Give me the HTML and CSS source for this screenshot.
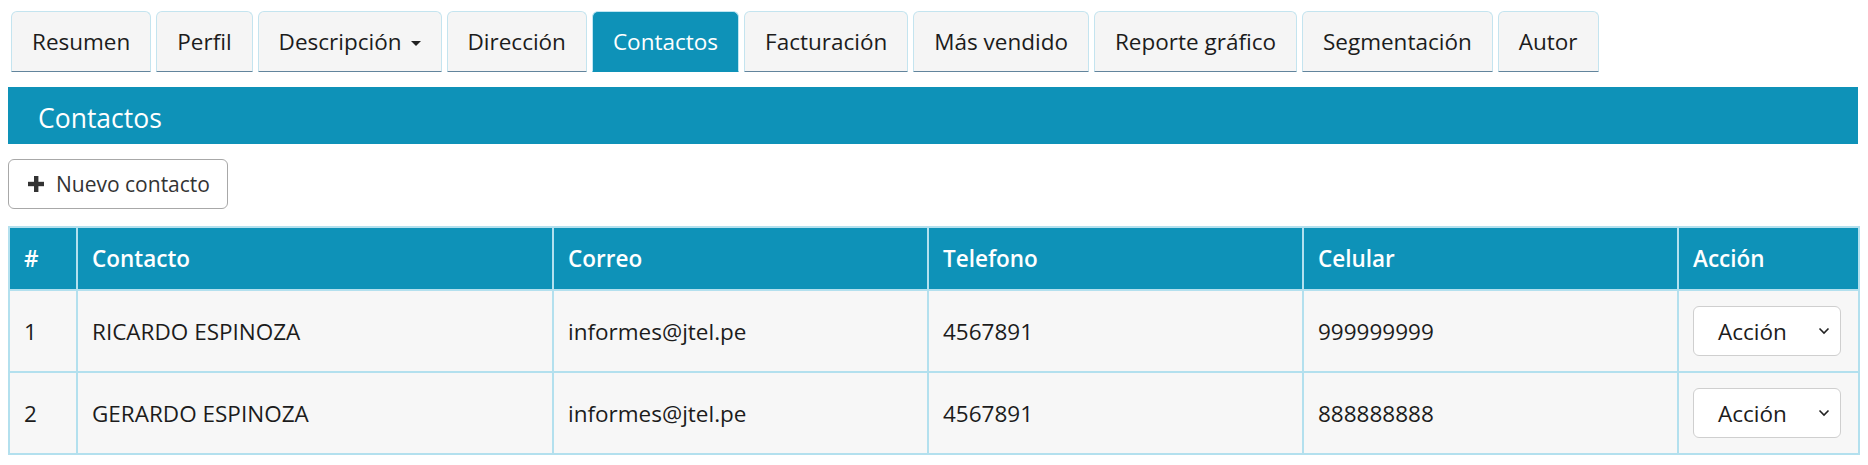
FILE: index.html
```html
<!DOCTYPE html>
<html lang="es">
<head>
    <meta charset="UTF-8">
    <title>Contactos</title>
    <link rel="stylesheet" href="styles.css">
</head>
<body>

    <!-- Pestañas -->
    <ul class="tabs">
        <li class="tab">Resumen</li>
        <li class="tab">Perfil</li>
        <li class="tab">Descripción <span class="caret"></span></li>
        <li class="tab">Dirección</li>
        <li class="tab active">Contactos</li>
        <li class="tab">Facturación</li>
        <li class="tab">Más vendido</li>
        <li class="tab">Reporte gráfico</li>
        <li class="tab">Segmentación</li>
        <li class="tab">Autor</li>
    </ul>

    <div class="panel-heading">Contactos</div>

    <button class="btn-new">
        <svg class="icon-plus" width="16" height="16" viewBox="0 0 16 16">
            <rect x="6" y="0" width="4.4" height="16" fill="#333"/>
            <rect x="0" y="5.8" width="16" height="4.4" fill="#333"/>
        </svg>
        Nuevo contacto
    </button>

    <table class="contacts">
        <colgroup>
            <col class="c-num">
            <col class="c-name">
            <col class="c-mid">
            <col class="c-mid">
            <col class="c-mid">
            <col class="c-act">
        </colgroup>
        <thead>
            <tr>
                <th>#</th>
                <th>Contacto</th>
                <th>Correo</th>
                <th>Telefono</th>
                <th>Celular</th>
                <th>Acción</th>
            </tr>
        </thead>
        <tbody>
            <tr>
                <td>1</td>
                <td>RICARDO ESPINOZA</td>
                <td>informes@jtel.pe</td>
                <td>4567891</td>
                <td>999999999</td>
                <td>
                    <div class="select">
                        <span>Acción</span>
                        <svg width="12" height="8" viewBox="0 0 12 8"><path d="M1.5 1.5 L6 6 L10.5 1.5" fill="none" stroke="#222" stroke-width="1.6"/></svg>
                    </div>
                </td>
            </tr>
            <tr>
                <td>2</td>
                <td>GERARDO ESPINOZA</td>
                <td>informes@jtel.pe</td>
                <td>4567891</td>
                <td>888888888</td>
                <td>
                    <div class="select">
                        <span>Acción</span>
                        <svg width="12" height="8" viewBox="0 0 12 8"><path d="M1.5 1.5 L6 6 L10.5 1.5" fill="none" stroke="#222" stroke-width="1.6"/></svg>
                    </div>
                </td>
            </tr>
        </tbody>
    </table>

</body>
</html>
```

FILE: styles.css
```css
* {
    box-sizing: border-box;
}

body {
    margin: 0;
    padding: 11px 10px 0 8px;
    font-family: "Open Sans", "Noto Sans", sans-serif;
    font-size: 22.5px;
    color: #1c1c1c;
    background-color: #fff;
}

/* Tabs row */
.tabs {
    display: flex;
    gap: 5px;
    list-style: none;
    margin: 0 0 0 3px;
    padding: 0;
}

.tab {
    display: flex;
    align-items: center;
    height: 61px;
    padding: 0 20px;
    white-space: nowrap;
    background-color: #f5f5f5;
    border: 1px solid #c4e4ef;
    border-bottom: 1px solid #62849c;
    border-radius: 6px 6px 0 0;
}

.tab.active {
    background-color: #0e92b8;
    border-color: #bfe6f2;
    border-bottom-color: #0e92b8;
    color: #fff;
}

.caret {
    display: inline-block;
    margin-left: 9px;
    margin-top: 3px;
    border-top: 5px solid #222;
    border-left: 5px solid transparent;
    border-right: 5px solid transparent;
}

/* Panel title */
.panel-heading {
    display: flex;
    align-items: center;
    margin-top: 15px;
    height: 57px;
    padding: 4px 0 0 30px;
    background-color: #0e92b8;
    color: #fff;
    font-size: 26.5px;
}

/* New contact button */
.btn-new {
    display: flex;
    align-items: center;
    gap: 12px;
    margin-top: 15px;
    width: 220px;
    height: 50px;
    padding: 0 19px;
    white-space: nowrap;
    background-color: #fff;
    border: 1px solid #a8a8a8;
    border-radius: 6px;
    font-family: inherit;
    font-size: 21px;
    color: #333;
}

.icon-plus {
    flex-shrink: 0;
}

/* Table */
.contacts {
    margin-top: 17px;
    width: 1850px;
    border-collapse: collapse;
    table-layout: fixed;
    border: 2px solid #b3e0ee;
}

.c-num { width: 68px; }
.c-name { width: 476px; }
.c-mid { width: 375px; }
.c-act { width: 181px; }

.contacts th,
.contacts td {
    border: 2px solid #b3e0ee;
    padding: 0 14px;
    text-align: left;
    vertical-align: middle;
}

.contacts th {
    height: 63px;
    background-color: #0e92b8;
    color: #fff;
    font-weight: 600;
}

.contacts td {
    height: 82px;
    background-color: #f7f7f7;
}

.select {
    display: flex;
    align-items: center;
    justify-content: space-between;
    width: 148px;
    height: 50px;
    padding: 0 10px 0 24px;
    background-color: #fff;
    border: 1px solid #cfcfcf;
    border-radius: 6px;
}
```
